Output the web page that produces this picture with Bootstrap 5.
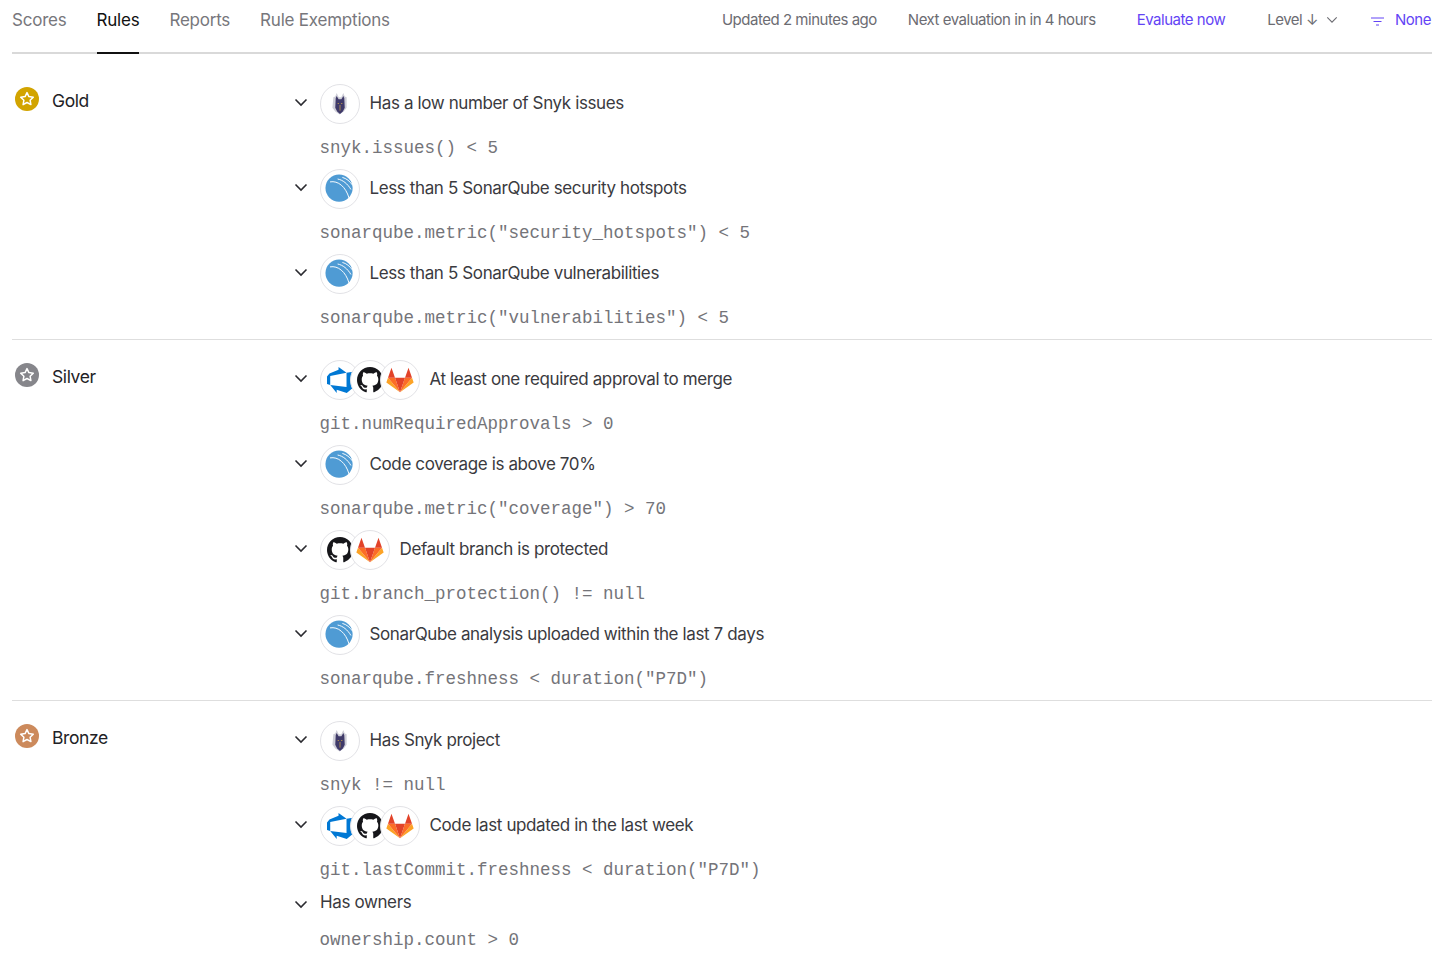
<!DOCTYPE html>
<html lang="en">
<head>
<meta charset="UTF-8">
<meta name="viewport" content="width=device-width, initial-scale=1.0">
<title>Rules</title>
<link href="https://cdn.jsdelivr.net/npm/bootstrap@5.3.3/dist/css/bootstrap.min.css" rel="stylesheet">
<style>
body { font-family: Inter, "Liberation Sans", sans-serif; color: #2b2b30; background: #fff; overflow: hidden; }
.page-wrap { padding: 0 20px 0 12px; }
.tab-bar { height: 54px; border-bottom: 2px solid #d9d9d9; margin-bottom: 10px; }
.tab-link { height: 54px; margin-bottom: -2px; padding-top: 8px; font-size: 17px; letter-spacing: -.22px; color: #77777c; text-decoration: none; }
.tab-link.is-on { color: #111; border-bottom: 2px solid #111; }
.tab-gap { gap: 30px; }
.bar-note { font-size: 15px; letter-spacing: -.48px; color: #6c6c72; padding: 11px 1px 0 0; line-height: 18px; }
.bar-link { color: #6344f5; text-decoration: none; }
.note-updated { margin-right: 31px; }
.note-next { margin-right: 41px; }
.note-eval { margin-right: 42px; }
.note-level { margin-right: 33px; }
.level-chev { margin-left: 8px; vertical-align: 1px; }
.filter-ico { margin: 6px 11px 0 0; }
.level-block { padding: 20px 0 0; border-bottom: 1px solid #dedede; }
.level-block:last-child { border-bottom: 0; }
.level-name { width: 276px; padding: 3px 0 0 3px; gap: 13px; font-size: 17.5px; line-height: 24px; letter-spacing: -.4px; color: #222226; }
.level-label { padding-top: 2px; }
.star-dot { width: 24px; height: 24px; }
.rule-row { height: 85px; }
.rule-head { height: 40px; }
.chev-slot { width: 32px; padding-right: 6px; }
.rule-head .chev-slot { padding-bottom: 4px; }
.logo-dot { width: 40px; height: 40px; background: #fff; border: 1px solid #e2e2e6; margin-right: -10px; }
.logo-stack { margin-right: 19.5px; }
.rule-title { font-size: 17px; letter-spacing: -.38px; color: #3a3a40; }
.rule-code { margin: 13px 0 0 31.5px; font-family: "Liberation Mono", monospace; font-size: 17.5px; line-height: 22px; color: #747479; white-space: pre; }
.rule-plain { height: 26px; }
.rule-plain .rule-title { padding-bottom: 2px; }
.rule-plain + .rule-code { margin-top: 12px; }
</style>
</head>
<body>
<svg width="0" height="0" class="position-absolute">
  <symbol id="star" viewBox="0 0 24 24">
    <path d="M12 5.600l1.900 4 4.400.6-3.200 3 .8 4.400-3.900-2.100-3.900 2.100.8-4.400-3.200-3 4.400-.6z" fill="none" stroke="#fff" stroke-width="1.500" stroke-linejoin="round"/>
  </symbol>
  <symbol id="chev" viewBox="0 0 14 9">
    <path d="M1.500 1.500L7 7l5.500-5.500" fill="none" stroke="#2b2b30" stroke-width="1.600"/>
  </symbol>
  <symbol id="chev-thin" viewBox="0 0 14 9">
    <path d="M1.500 1.500L7 7l5.500-5.500" fill="none" stroke="#6c6c72" stroke-width="1.300"/>
  </symbol>
  <symbol id="snyk" viewBox="0 0 40 40">
    <path d="M13 13l2-1 1.500-3.500 2.200 4.500h2.600l2.200-4.500 1.500 3.500 2 1v11l-3 4-4.500 3-4.500-3-3-4z" fill="#cfcfd8"/>
    <path d="M15.500 14l1-2.500 2 3.500h3l2-3.500 1 2.500.5 10-2 4-3 2.500-3-2.500-2-4z" fill="#3f3a69"/>
    <path d="M17.500 19.500h1.500m2 0h1.500M20 21v6" stroke="#c9a14a" stroke-width=".8" fill="none"/>
  </symbol>
  <symbol id="sonar" viewBox="0 0 40 40">
    <circle cx="19" cy="19" r="14.300" fill="#4f9bd4"/>
    <path d="M9.500 12.500c8.500-1.500 16.500 5 20 17M17.500 9.500c5.500 1 10.500 5 14 11M22.500 7.800c4 1 8 4 11 8.500" fill="none" stroke="#fff" stroke-width="1"/>
  </symbol>
  <symbol id="azure" viewBox="0 0 24 24">
    <path fill="#0078d4" d="M0 8.877L2.247 5.910l8.405-3.416V.022l7.370 5.393L2.966 8.338v8.225L0 15.707zm24-4.450v14.651l-5.753 4.900-9.303-3.057v3.056l-5.978-7.416 15.057 1.798V5.415z"/>
  </symbol>
  <symbol id="github" viewBox="0 0 16 16">
    <path fill="#16161a" d="M8 0C3.580 0 0 3.580 0 8c0 3.540 2.290 6.530 5.470 7.590.4.070.55-.17.55-.38 0-.19-.01-.82-.01-1.490-2.010.37-2.530-.49-2.690-.94-.09-.23-.48-.94-.82-1.130-.28-.15-.68-.52-.01-.53.63-.01 1.080.58 1.230.82.72 1.210 1.870.87 2.330.66.07-.52.28-.87.51-1.070-1.780-.2-3.640-.89-3.640-3.950 0-.87.31-1.590.82-2.150-.08-.2-.36-1.020.08-2.120 0 0 .67-.21 2.200.82.64-.18 1.320-.27 2-.27.68 0 1.360.09 2 .27 1.530-1.040 2.200-.82 2.200-.82.44 1.100.16 1.920.08 2.120.51.56.82 1.270.82 2.150 0 3.070-1.870 3.750-3.650 3.950.29.25.54.73.54 1.480 0 1.070-.01 1.930-.01 2.200 0 .21.15.46.55.38A8.013 8.013 0 0016 8c0-4.420-3.580-8-8-8z"/>
  </symbol>
  <symbol id="gitlab" viewBox="0 0 24 24">
    <path fill="#fca326" d="M1.700 10L.3 14.200l11.700 8.300z"/>
    <path fill="#fca326" d="M22.300 10l1.400 4.200L12 22.500z"/>
    <path fill="#fc6d26" d="M1.700 10h6L12 22.500zm20.600 0h-6L12 22.500z"/>
    <path fill="#e24329" d="M7.700 10h8.600L12 22.500zM1.700 10l3-8.500L7.700 10zm20.600 0l-3-8.500-3 8.500z"/>
  </symbol>
</svg>

<div class="page-wrap">
  <div class="tab-bar d-flex justify-content-between">
    <div class="d-flex tab-gap">
      <a class="tab-link" href="#">Scores</a>
      <a class="tab-link is-on" href="#">Rules</a>
      <a class="tab-link" href="#">Reports</a>
      <a class="tab-link" href="#">Rule Exemptions</a>
    </div>
    <div class="d-flex bar-note">
      <span class="note-updated">Updated 2 minutes ago</span>
      <span class="note-next">Next evaluation in in 4 hours</span>
      <a class="bar-link note-eval" href="#">Evaluate now</a>
      <span class="note-level">Level ↓<svg width="12" height="8" class="level-chev"><use href="#chev-thin"/></svg></span>
      <svg width="13" height="9" viewBox="0 0 13 9" class="filter-ico"><path d="M0 1h13M2.500 4.500h8M5 8h3" stroke="#6344f5" stroke-width="1"/></svg>
      <a class="bar-link" href="#">None</a>
    </div>
  </div>

  <div class="level-block d-flex">
    <div class="level-name d-flex">
      <svg class="star-dot"><circle cx="12" cy="12" r="12" fill="#d2a400"/><use href="#star"/></svg>
      <span class="level-label">Gold</span>
    </div>
    <div class="flex-grow-1">
      <div class="rule-row">
        <div class="rule-head d-flex align-items-center">
          <div class="chev-slot d-flex justify-content-center"><svg width="14" height="9"><use href="#chev"/></svg></div>
          <div class="logo-stack d-flex"><div class="logo-dot rounded-circle"><svg width="38" height="38"><use href="#snyk"/></svg></div></div>
          <span class="rule-title">Has a low number of Snyk issues</span>
        </div>
        <div class="rule-code">snyk.issues() &lt; 5</div>
      </div>
      <div class="rule-row">
        <div class="rule-head d-flex align-items-center">
          <div class="chev-slot d-flex justify-content-center"><svg width="14" height="9"><use href="#chev"/></svg></div>
          <div class="logo-stack d-flex"><div class="logo-dot rounded-circle"><svg width="38" height="38"><use href="#sonar"/></svg></div></div>
          <span class="rule-title">Less than 5 SonarQube security hotspots</span>
        </div>
        <div class="rule-code">sonarqube.metric("security_hotspots") &lt; 5</div>
      </div>
      <div class="rule-row">
        <div class="rule-head d-flex align-items-center">
          <div class="chev-slot d-flex justify-content-center"><svg width="14" height="9"><use href="#chev"/></svg></div>
          <div class="logo-stack d-flex"><div class="logo-dot rounded-circle"><svg width="38" height="38"><use href="#sonar"/></svg></div></div>
          <span class="rule-title">Less than 5 SonarQube vulnerabilities</span>
        </div>
        <div class="rule-code">sonarqube.metric("vulnerabilities") &lt; 5</div>
      </div>
    </div>
  </div>

  <div class="level-block d-flex">
    <div class="level-name d-flex">
      <svg class="star-dot"><circle cx="12" cy="12" r="12" fill="#86868b"/><use href="#star"/></svg>
      <span class="level-label">Silver</span>
    </div>
    <div class="flex-grow-1">
      <div class="rule-row">
        <div class="rule-head d-flex align-items-center">
          <div class="chev-slot d-flex justify-content-center"><svg width="14" height="9"><use href="#chev"/></svg></div>
          <div class="logo-stack d-flex">
            <div class="logo-dot rounded-circle d-flex align-items-center justify-content-center"><svg width="26" height="26"><use href="#azure"/></svg></div>
            <div class="logo-dot rounded-circle d-flex align-items-center justify-content-center"><svg width="26" height="26"><use href="#github"/></svg></div>
            <div class="logo-dot rounded-circle d-flex align-items-center justify-content-center"><svg width="28" height="28"><use href="#gitlab"/></svg></div>
          </div>
          <span class="rule-title">At least one required approval to merge</span>
        </div>
        <div class="rule-code">git.numRequiredApprovals &gt; 0</div>
      </div>
      <div class="rule-row">
        <div class="rule-head d-flex align-items-center">
          <div class="chev-slot d-flex justify-content-center"><svg width="14" height="9"><use href="#chev"/></svg></div>
          <div class="logo-stack d-flex"><div class="logo-dot rounded-circle"><svg width="38" height="38"><use href="#sonar"/></svg></div></div>
          <span class="rule-title">Code coverage is above 70%</span>
        </div>
        <div class="rule-code">sonarqube.metric("coverage") &gt; 70</div>
      </div>
      <div class="rule-row">
        <div class="rule-head d-flex align-items-center">
          <div class="chev-slot d-flex justify-content-center"><svg width="14" height="9"><use href="#chev"/></svg></div>
          <div class="logo-stack d-flex">
            <div class="logo-dot rounded-circle d-flex align-items-center justify-content-center"><svg width="26" height="26"><use href="#github"/></svg></div>
            <div class="logo-dot rounded-circle d-flex align-items-center justify-content-center"><svg width="28" height="28"><use href="#gitlab"/></svg></div>
          </div>
          <span class="rule-title">Default branch is protected</span>
        </div>
        <div class="rule-code">git.branch_protection() != null</div>
      </div>
      <div class="rule-row">
        <div class="rule-head d-flex align-items-center">
          <div class="chev-slot d-flex justify-content-center"><svg width="14" height="9"><use href="#chev"/></svg></div>
          <div class="logo-stack d-flex"><div class="logo-dot rounded-circle"><svg width="38" height="38"><use href="#sonar"/></svg></div></div>
          <span class="rule-title">SonarQube analysis uploaded within the last 7 days</span>
        </div>
        <div class="rule-code">sonarqube.freshness &lt; duration("P7D")</div>
      </div>
    </div>
  </div>

  <div class="level-block d-flex">
    <div class="level-name d-flex">
      <svg class="star-dot"><circle cx="12" cy="12" r="12" fill="#cc8a5c"/><use href="#star"/></svg>
      <span class="level-label">Bronze</span>
    </div>
    <div class="flex-grow-1">
      <div class="rule-row">
        <div class="rule-head d-flex align-items-center">
          <div class="chev-slot d-flex justify-content-center"><svg width="14" height="9"><use href="#chev"/></svg></div>
          <div class="logo-stack d-flex"><div class="logo-dot rounded-circle"><svg width="38" height="38"><use href="#snyk"/></svg></div></div>
          <span class="rule-title">Has Snyk project</span>
        </div>
        <div class="rule-code">snyk != null</div>
      </div>
      <div class="rule-row">
        <div class="rule-head d-flex align-items-center">
          <div class="chev-slot d-flex justify-content-center"><svg width="14" height="9"><use href="#chev"/></svg></div>
          <div class="logo-stack d-flex">
            <div class="logo-dot rounded-circle d-flex align-items-center justify-content-center"><svg width="26" height="26"><use href="#azure"/></svg></div>
            <div class="logo-dot rounded-circle d-flex align-items-center justify-content-center"><svg width="26" height="26"><use href="#github"/></svg></div>
            <div class="logo-dot rounded-circle d-flex align-items-center justify-content-center"><svg width="28" height="28"><use href="#gitlab"/></svg></div>
          </div>
          <span class="rule-title">Code last updated in the last week</span>
        </div>
        <div class="rule-code">git.lastCommit.freshness &lt; duration("P7D")</div>
      </div>
      <div>
        <div class="rule-plain d-flex align-items-center">
          <div class="chev-slot d-flex justify-content-center"><svg width="14" height="9"><use href="#chev"/></svg></div>
          <span class="rule-title">Has owners</span>
        </div>
        <div class="rule-code">ownership.count &gt; 0</div>
      </div>
    </div>
  </div>
</div>
</body>
</html>
